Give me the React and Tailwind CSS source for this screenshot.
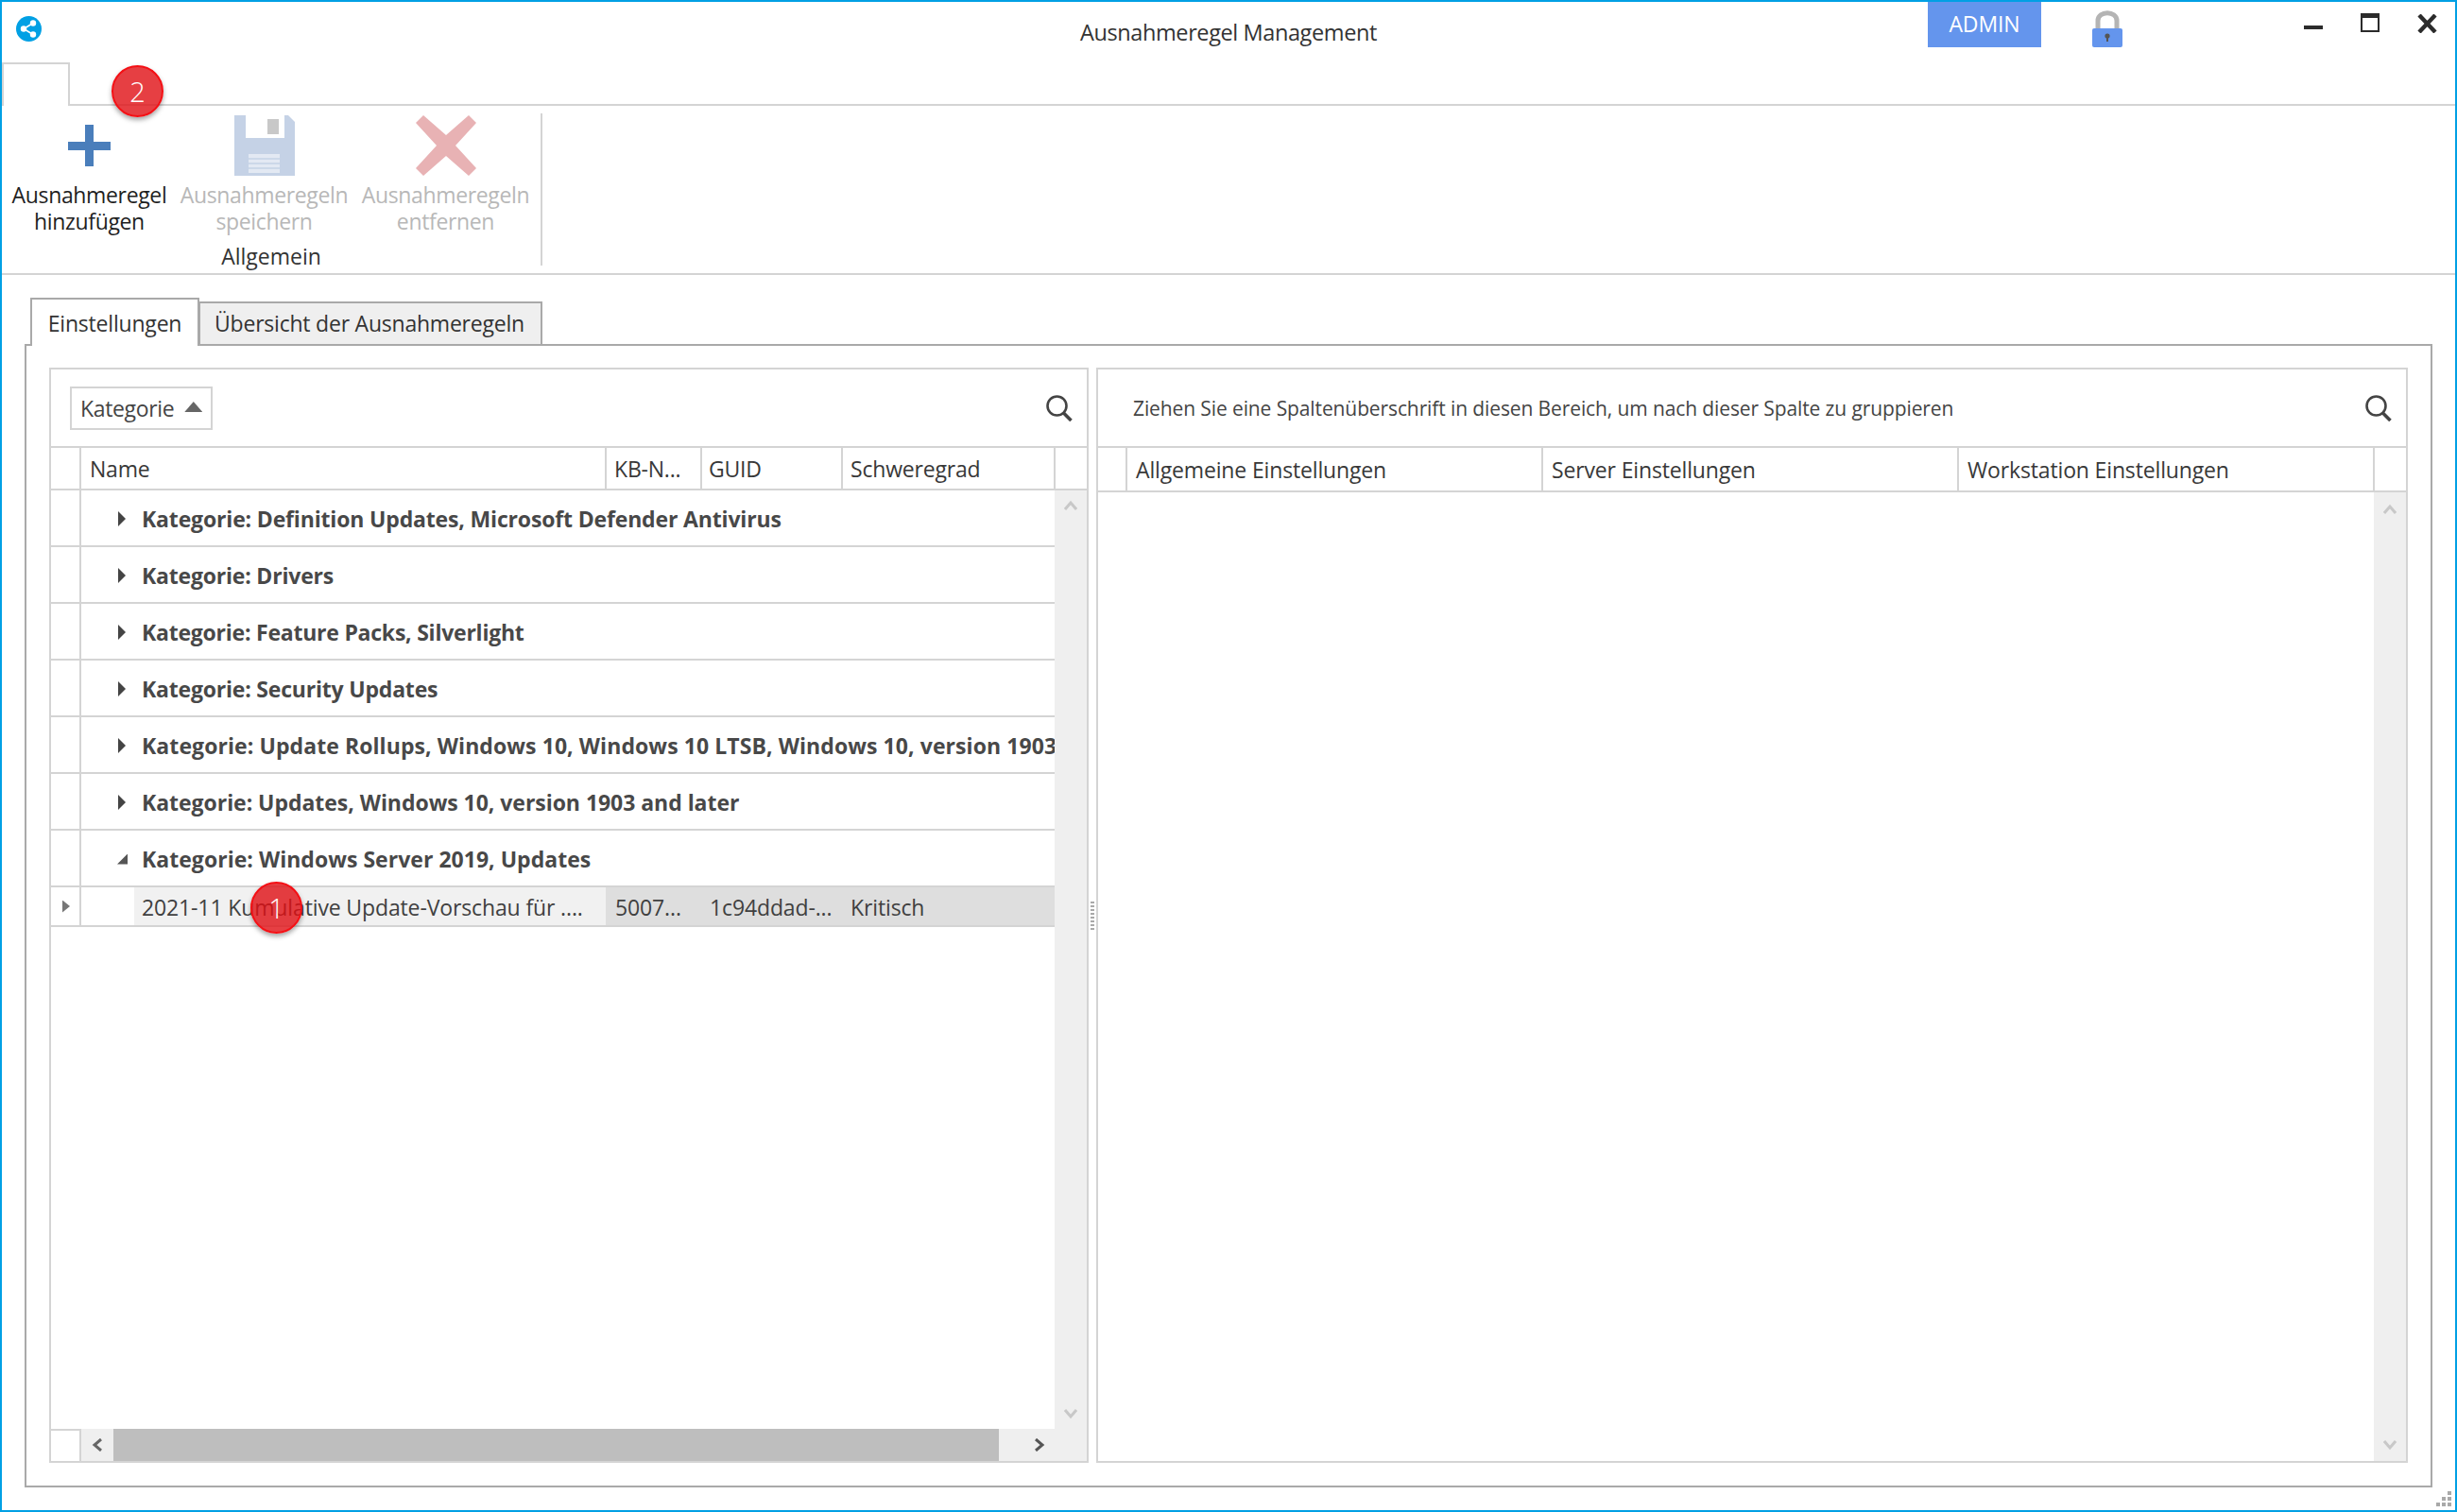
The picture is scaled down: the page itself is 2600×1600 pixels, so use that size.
import React from "react";

const groups = [
  { title: "Kategorie: Definition Updates, Microsoft Defender Antivirus", tracking: "tracking-[-0.16px]" },
  { title: "Kategorie: Drivers", tracking: "tracking-[-0.2px]" },
  { title: "Kategorie: Feature Packs, Silverlight", tracking: "tracking-[-0.23px]" },
  { title: "Kategorie: Security Updates", tracking: "tracking-[-0.2px]" },
  { title: "Kategorie: Update Rollups, Windows 10, Windows 10 LTSB, Windows 10, version 1903", tracking: "tracking-[0.08px]" },
  { title: "Kategorie: Updates, Windows 10, version 1903 and later", tracking: "tracking-[-0.04px]" },
];

const Chevron = ({ dir, className }) => {
  const paths = {
    up: "M1 10 L7 3 L13 10",
    down: "M1 2 L7 9 L13 2",
    left: "M10 1 L3 7 L10 13",
    right: "M3 1 L10 7 L3 13",
  };
  const box = dir === "up" || dir === "down" ? "0 0 14 12" : "0 0 13 14";
  const size = dir === "up" || dir === "down" ? "w-[14px] h-[12px]" : "w-[13px] h-[14px]";
  return (
    <svg viewBox={box} className={`${size} ${className}`} fill="none" stroke="currentColor" strokeWidth="3">
      <path d={paths[dir]} />
    </svg>
  );
};

const SearchIcon = () => (
  <svg viewBox="0 0 28 28" className="w-[28px] h-[28px] text-[#444444]" fill="none" stroke="currentColor">
    <circle cx="11.5" cy="11.5" r="10" strokeWidth="2.6" />
    <path d="M18.5 19 L26.5 27" strokeWidth="3.6" />
  </svg>
);

const Badge = ({ n, className }) => (
  <div className={`absolute w-[55px] h-[55px] rounded-full bg-[#e00f14]/80 border-2 border-[#f41015] shadow-[0_3px_5px_rgba(0,0,0,0.35)] flex items-center justify-center text-white text-[29px] font-light leading-none z-20 ${className}`}>
    {n}
  </div>
);

const RibbonButton = ({ icon, lines, disabled, className }) => (
  <div className={`flex flex-col items-center w-[185px] ${className || ""}`}>
    <div className="h-[64px] flex items-center justify-center">{icon}</div>
    <div className={`mt-[6px] text-center text-[23px] leading-[28px] tracking-[-0.35px] ${disabled ? "text-[#b8b8b8]" : "text-[#1f1f1f]"}`}>
      {lines.map((l) => (
        <div key={l}>{l}</div>
      ))}
    </div>
  </div>
);

const GroupRow = ({ title, tracking, open }) => (
  <div className="flex h-[60px] border-b-2 border-[#d4d4d4]">
    <div className="w-[32px] border-r-2 border-[#d4d4d4] shrink-0" />
    <div className="flex items-center flex-1 min-w-0 overflow-hidden pl-[39px] pt-[2px]">
      {open ? (
        <div className="w-[11px] h-[11px] -ml-[1px] mr-[15px] shrink-0 bg-[#555555] [clip-path:polygon(100%_0,100%_100%,0_100%)]" />
      ) : (
        <div className="w-[8px] h-[16px] mr-[17px] shrink-0 bg-[#444444] [clip-path:polygon(0_0,100%_50%,0_100%)]" />
      )}
      <span className={`whitespace-nowrap text-[23px] font-bold text-[#484848] ${tracking}`}>{title}</span>
    </div>
  </div>
);

export default function App() {
  return (
    <div className="relative w-screen h-screen flex flex-col bg-white border-2 border-[#01a0e4] overflow-hidden font-['Open_Sans','Noto_Sans',sans-serif]">
      {/* Title bar */}
      <div className="grid grid-cols-[1fr_auto_1fr] items-start h-[64px] shrink-0">
        <div className="pl-[15px] pt-[15px]">
          <svg viewBox="0 0 27 27" className="w-[27px] h-[27px]">
            <circle cx="13.5" cy="13.5" r="13.5" fill="#01a0e4" />
            <g fill="#ffffff">
              <circle cx="18" cy="7.5" r="3.2" />
              <circle cx="8" cy="13.5" r="3.2" />
              <circle cx="18" cy="19.5" r="3.2" />
            </g>
            <path d="M18 7.5 L8 13.5 L18 19.5" stroke="#ffffff" strokeWidth="1.6" fill="none" />
          </svg>
        </div>
        <div className="pt-[16px] text-[23.5px] leading-[32px] text-[#333333] tracking-[-0.4px]">Ausnahmeregel Management</div>
        <div className="flex justify-end items-start h-full">
          <div className="-mt-[2px] w-[120px] h-[50px] pt-[1px] bg-[#6495ed] text-white text-[23px] tracking-[-0.1px] flex items-center justify-center">ADMIN</div>
          <svg viewBox="0 0 32 40" className="ml-[54px] mt-[8px] w-[32px] h-[40px]">
            <path d="M6 20 V12 C6 1 26 1 26 12 V20" fill="none" stroke="#b4b4b4" strokeWidth="5" />
            <rect x="0" y="20" width="32" height="20" rx="2" fill="#6495ed" />
            <circle cx="16" cy="28" r="2.6" fill="#555555" />
            <rect x="15" y="28" width="2" height="6" fill="#555555" />
          </svg>
          <div className="ml-[192px] mr-[19px] mt-[12px] flex items-start gap-[40px]">
            <div className="w-[20px] h-[4px] mt-[13px] bg-[#2b2b2b]" />
            <div className="w-[20px] h-[20px] border-2 border-t-[5px] border-[#2b2b2b]" />
            <svg viewBox="0 0 21 20" className="w-[21px] h-[20px] mt-[1px]" fill="none" stroke="#2b2b2b" strokeWidth="4.4">
              <path d="M2 1 L19 19 M19 1 L2 19" />
            </svg>
          </div>
        </div>
      </div>

      {/* Ribbon tab strip */}
      <div className="flex h-[46px] shrink-0">
        <div className="w-[72px] border-2 border-b-0 border-[#d4d4d4]" />
        <div className="flex-1 border-b-2 border-[#d4d4d4]" />
      </div>

      {/* Ribbon */}
      <div className="h-[179px] shrink-0 border-b-2 border-[#d4d4d4] flex items-start pt-[8px]">
        <div className="relative h-[161px] w-[572px] border-r-2 border-[#d4d4d4] flex flex-col">
          <div className="flex pt-[2px]">
            <RibbonButton
              lines={["Ausnahmeregel", "hinzufügen"]}
              icon={
                <svg viewBox="0 0 45 44" className="w-[45px] h-[44px] -ml-[1px]" fill="#4a7ebb">
                  <rect x="18" y="0" width="9" height="44" />
                  <rect x="0" y="18" width="45" height="9" />
                </svg>
              }
            />
            <RibbonButton
              disabled
              lines={["Ausnahmeregeln", "speichern"]}
              icon={
                <svg viewBox="0 0 64 64" className="w-[64px] h-[64px]">
                  <path d="M0 0 H57 L64 7 V64 H0 Z" fill="#c5d2e6" />
                  <rect x="12" y="0" width="41" height="24" fill="#ffffff" />
                  <rect x="35" y="4" width="12" height="16" fill="#c8c8c8" />
                  <rect x="15" y="41" width="33" height="20" fill="#e3e9f3" />
                  <path d="M15 46 H48 M15 51 H48 M15 56 H48" stroke="#c5d2e6" strokeWidth="1.6" />
                </svg>
              }
            />
            <RibbonButton
              disabled
              className="ml-[7px]"
              lines={["Ausnahmeregeln", "entfernen"]}
              icon={
                <svg viewBox="0 0 64 64" className="w-[64px] h-[64px]" fill="#e8b2b4">
                  <path d="M8 0 L32 21 L56 0 L64 8 L42 32 L64 56 L56 64 L32 43 L8 64 L0 56 L22 32 L0 8 Z" />
                </svg>
              }
            />
          </div>
          <div className="absolute left-[180px] top-[137px] w-[210px] text-center text-[23px] leading-[28px] text-[#333333]">Allgemein</div>
        </div>
      </div>

      {/* Content */}
      <div className="flex-1 min-h-0 flex flex-col p-6">
        <div className="flex items-end h-[49px] ml-[6px] shrink-0 relative z-10">
          <div className="w-[179px] h-[51px] -mb-[2px] border-2 border-b-0 border-[#a9a9a9] bg-white flex items-center justify-center pt-[1px] text-[23px] tracking-[-0.2px] text-[#333333]">Einstellungen</div>
          <div className="-ml-[1px] w-[364px] h-[45px] border-2 border-b-0 border-[#a9a9a9] bg-[#efefef] flex items-center justify-center pr-[2px] text-[23px] tracking-[-0.22px] text-[#333333]">Übersicht der Ausnahmeregeln</div>
        </div>

        <div className="flex-1 min-h-0 border-2 border-[#a9a9a9] flex px-[24px] pt-[23px] pb-[24px]">
          {/* Left panel */}
          <div className="w-[1100px] shrink-0 border-2 border-[#d4d4d4] flex flex-col text-[#404040]">
            <div className="h-[83px] shrink-0 border-b-2 border-[#d4d4d4] flex items-center justify-between pl-[20px] pr-[15px]">
              <div className="w-[151px] h-[46px] border-2 border-[#d4d4d4] flex items-center pl-[9px] pt-[1px] text-[23px] tracking-[-0.35px] text-[#444444]">
                Kategorie
                <div className="ml-[11px] -mt-[3px] w-[19px] h-[11px] bg-[#666666] [clip-path:polygon(50%_0,100%_100%,0_100%)]" />
              </div>
              <SearchIcon />
            </div>
            <div className="h-[45px] shrink-0 border-b-2 border-[#d4d4d4] flex text-[23px] tracking-[-0.2px] text-[#383838]">
              <div className="w-[32px] border-r-2 border-[#d4d4d4]" />
              <div className="w-[556px] border-r-2 border-[#d4d4d4] flex items-center pl-[9px] pt-[2px]">Name</div>
              <div className="w-[101px] border-r-2 border-[#d4d4d4] flex items-center pl-[8px] pt-[2px] whitespace-nowrap">KB-N...</div>
              <div className="w-[149px] border-r-2 border-[#d4d4d4] flex items-center pl-[7px] pt-[2px]">GUID</div>
              <div className="w-[225px] border-r-2 border-[#d4d4d4] flex items-center pl-[8px] pt-[2px]">Schweregrad</div>
              <div className="flex-1" />
            </div>

            <div className="flex-1 min-h-0 flex">
              <div className="w-[1062px] shrink-0 min-w-0 flex flex-col">
                {groups.map((g) => (
                  <GroupRow key={g.title} title={g.title} tracking={g.tracking} />
                ))}
                <GroupRow title="Kategorie: Windows Server 2019, Updates" tracking="tracking-[0.03px]" open />
                <div className="flex h-[42px] border-b-2 border-[#d4d4d4] text-[23px] tracking-[-0.13px]">
                  <div className="w-[32px] border-r-2 border-[#d4d4d4] flex items-center pl-[12px]">
                    <div className="w-[8px] h-[13px] bg-[#777777] [clip-path:polygon(0_0,100%_50%,0_100%)]" />
                  </div>
                  <div className="w-[56px] shrink-0" />
                  <div className="w-[499px] bg-[#f1f1f1] flex items-center pl-[8px] pt-[3px] whitespace-nowrap overflow-hidden">2021-11 Kumulative Update-Vorschau für ....</div>
                  <div className="flex-1 bg-[#dedede] flex items-center pt-[3px]">
                    <div className="w-[101px] pl-[10px] whitespace-nowrap">5007...</div>
                    <div className="w-[149px] pl-[9px] whitespace-nowrap">1c94ddad-...</div>
                    <div className="pl-[9px]">Kritisch</div>
                  </div>
                </div>
              </div>
              <div className="flex-1 bg-[#efefef] flex flex-col items-center justify-between py-[10px] text-[#c8c8c8]">
                <Chevron dir="up" />
                <Chevron dir="down" />
              </div>
            </div>

            {/* Horizontal scrollbar */}
            <div className="h-[34px] shrink-0 flex">
              <div className="w-[32px] border-t-2 border-r-2 border-[#d4d4d4]" />
              <div className="flex-1 bg-[#efefef] flex">
                <div className="w-[34px] flex items-center justify-center text-[#666666]">
                  <Chevron dir="left" />
                </div>
                <div className="w-[937px] bg-[#bebebe]" />
                <div className="flex-1 flex items-center pl-[36px] text-[#555555]">
                  <Chevron dir="right" />
                </div>
              </div>
            </div>
          </div>

          {/* Splitter */}
          <div className="w-[8px] shrink-0 flex flex-col items-center justify-center gap-[2px]">
            {[0, 1, 2, 3, 4, 5, 6, 7].map((i) => (
              <div key={i} className="w-[4px] h-[2px] bg-[#a9a9a9]" />
            ))}
          </div>

          {/* Right panel */}
          <div className="flex-1 min-w-0 border-2 border-[#d4d4d4] flex flex-col text-[#404040]">
            <div className="h-[83px] shrink-0 border-b-2 border-[#d4d4d4] flex items-center justify-between pl-[37px] pr-[15px]">
              <span className="pt-[3px] text-[21px] tracking-[-0.11px] text-[#444444]">Ziehen Sie eine Spaltenüberschrift in diesen Bereich, um nach dieser Spalte zu gruppieren</span>
              <SearchIcon />
            </div>
            <div className="h-[47px] shrink-0 border-b-2 border-[#d4d4d4] flex text-[23px] tracking-[-0.15px] text-[#383838]">
              <div className="w-[31px] border-r-2 border-[#d4d4d4]" />
              <div className="w-[440px] border-r-2 border-[#d4d4d4] flex items-center pl-[9px] pt-[2px]">Allgemeine Einstellungen</div>
              <div className="w-[440px] border-r-2 border-[#d4d4d4] flex items-center pl-[9px] pt-[2px]">Server Einstellungen</div>
              <div className="w-[440px] border-r-2 border-[#d4d4d4] flex items-center pl-[9px] pt-[2px]">Workstation Einstellungen</div>
              <div className="flex-1" />
            </div>
            <div className="flex-1 min-h-0 flex justify-end">
              <div className="w-[34px] bg-[#efefef] flex flex-col items-center justify-between pt-[12px] pb-[11px] text-[#c8c8c8]">
                <Chevron dir="up" />
                <Chevron dir="down" />
              </div>
            </div>
          </div>
        </div>
      </div>

      {/* Window resize grip */}
      <svg viewBox="0 0 16 16" className="absolute right-[4px] bottom-[4px] w-[16px] h-[16px]" fill="#a9a9a9">
        <rect x="12" y="0" width="4" height="4" />
        <rect x="6" y="6" width="4" height="4" />
        <rect x="12" y="6" width="4" height="4" />
        <rect x="0" y="12" width="4" height="4" />
        <rect x="6" y="12" width="4" height="4" />
        <rect x="12" y="12" width="4" height="4" />
      </svg>

      <Badge n="2" className="left-[116px] top-[67px]" />
      <Badge n="1" className="left-[263px] top-[931px]" />
    </div>
  );
}
